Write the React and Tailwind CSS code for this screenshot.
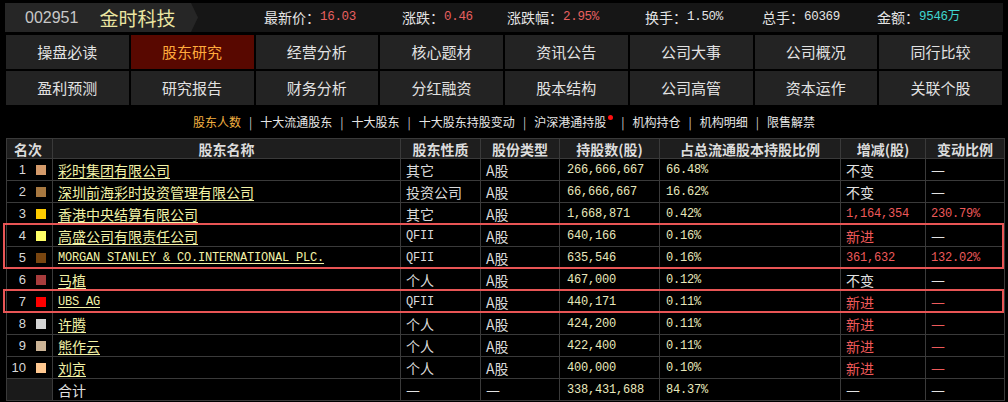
const CJK = "font-['Noto_Sans_CJK_SC','Noto_Sans',sans-serif]";
const MONO = "font-['Liberation_Mono','Noto_Sans_CJK_SC',monospace]";

const navRows = [
  ["操盘必读", "股东研究", "经营分析", "核心题材", "资讯公告", "公司大事", "公司概况", "同行比较"],
  ["盈利预测", "研究报告", "财务分析", "分红融资", "股本结构", "公司高管", "资本运作", "关联个股"],
];

const subTabs = ["股东人数", "十大流通股东", "十大股东", "十大股东持股变动", "沪深港通持股", "机构持仓", "机构明细", "限售解禁"];

const rows = [
  { no: 1, color: "#d49a6a", name: "彩时集团有限公司", kind: "其它", shares: "266,666,667", pct: "66.48%", chg: "不变", ratio: "—" },
  { no: 2, color: "#a87840", name: "深圳前海彩时投资管理有限公司", kind: "投资公司", shares: "66,666,667", pct: "16.62%", chg: "不变", ratio: "—" },
  { no: 3, color: "#ffcc00", name: "香港中央结算有限公司", kind: "其它", shares: "1,668,871", pct: "0.42%", chg: "1,164,354", ratio: "230.79%", red: true, redRatio: true },
  { no: 4, color: "#ffff66", name: "高盛公司有限责任公司", kind: "QFII", shares: "640,166", pct: "0.16%", chg: "新进", ratio: "—", red: true },
  { no: 5, color: "#7a4610", name: "MORGAN STANLEY & CO.INTERNATIONAL PLC.", latin: true, kind: "QFII", shares: "635,546", pct: "0.16%", chg: "361,632", ratio: "132.02%", red: true, redRatio: true },
  { no: 6, color: "#a83c3c", name: "马植", kind: "个人", shares: "467,000", pct: "0.12%", chg: "不变", ratio: "—" },
  { no: 7, color: "#ff0000", name: "UBS AG", latin: true, kind: "QFII", shares: "440,171", pct: "0.11%", chg: "新进", ratio: "—", red: true, redRatio: true },
  { no: 8, color: "#d4d4d4", name: "许腾", kind: "个人", shares: "424,200", pct: "0.11%", chg: "新进", ratio: "—", red: true, redRatio: true },
  { no: 9, color: "#ccb496", name: "熊作云", kind: "个人", shares: "422,400", pct: "0.11%", chg: "新进", ratio: "—", red: true, redRatio: true },
  { no: 10, color: "#ffc890", name: "刘京", kind: "个人", shares: "400,000", pct: "0.10%", chg: "新进", ratio: "—", red: true, redRatio: true },
];

function Stat({ label, value, color, w }) {
  return (
    <div className={`${w} flex items-center shrink-0`}>
      <span className={`${CJK} text-[14px] text-[#e4e4e4]`}>{label}：</span>
      <span className={`${MONO} text-[12.5px] tracking-[-0.3px] ${color}`}>{value}</span>
    </div>
  );
}

function fontFor(s) {
  if (s === "—") return "font-['DejaVu_Sans',sans-serif] text-[14px]";
  if (/^[0-9,.%A-Z ]+$/.test(s)) return `${MONO} text-[12px] tracking-[-0.2px]`;
  return `${CJK} text-[14px]`;
}

function Cell({ children, className = "" }) {
  return (
    <td className={`border border-[#3a3a3a] h-[22px] p-0 pl-[5px] whitespace-nowrap overflow-hidden ${fontFor(children)} ${className}`}>
      {children}
    </td>
  );
}

export default function App() {
  return (
    <div className={`w-[1008px] h-[402px] bg-black overflow-hidden pt-[3px] ${CJK}`}>
      {/* top bar */}
      <div className="mx-[5px] h-[29px] bg-[#161616] flex items-center">
        <div className="h-full w-[193px] bg-[#262626] flex items-center [clip-path:polygon(0_0,186px_0,193px_50%,186px_100%,0_100%)]">
          <span className="ml-[20px] font-['Liberation_Sans',sans-serif] text-[16px] text-[#c8c8c8]">002951</span>
          <span className="ml-[21px] text-[19px] text-[#ebe6a2] leading-none">金时科技</span>
        </div>
        <div className="ml-[66px] flex items-center">
          <Stat label="最新价" value="16.03" color="text-[#e86060]" w="w-[138px]" />
          <Stat label="涨跌" value="0.46" color="text-[#e86060]" w="w-[105px]" />
          <Stat label="涨跌幅" value="2.95%" color="text-[#e86060]" w="w-[138px]" />
          <Stat label="换手" value="1.50%" color="text-[#e4e4e4]" w="w-[117px]" />
          <Stat label="总手" value="60369" color="text-[#e4e4e4]" w="w-[115px]" />
          <Stat label="金额" value="9546万" color="text-[#3fd6d0]" w="w-[110px]" />
        </div>
      </div>

      {/* nav */}
      <div className="mt-[3px] mx-[6px] grid grid-cols-8 gap-[2px]">
        {navRows.flat().map((t) => (
          <div
            key={t}
            className={`h-[34px] flex items-center justify-center text-[15px] ${t === "股东研究" ? "bg-[#580800] text-[#ffaa3c]" : "bg-[#232323] text-[#e2e2e2]"}`}
          >
            {t}
          </div>
        ))}
      </div>

      {/* sub tabs */}
      <div className="h-[33px] flex items-center justify-center text-[12px] text-[#e6e6e6]">
        {subTabs.map((t, i) => (
          <div key={t} className="flex items-center">
            {i > 0 && <span className="mx-[8px] text-[#cfcfcf]">|</span>}
            <span className={i === 0 ? "text-[#f2b040]" : ""}>{t}</span>
            {t === "沪深港通持股" && <span className="ml-[2px] mb-[8px] w-[5px] h-[5px] rounded-full bg-[#ff1010]" />}
          </div>
        ))}
      </div>

      {/* table */}
      <div className="relative mx-[6px]">
        <table className="table-fixed border-collapse w-[998px] leading-[18px]">
          <colgroup>
            <col className="w-[46px]" />
            <col className="w-[348px]" />
            <col className="w-[80px]" />
            <col className="w-[79px]" />
            <col className="w-[100px]" />
            <col className="w-[181px]" />
            <col className="w-[85px]" />
            <col className="w-[79px]" />
          </colgroup>
          <thead>
            <tr className="h-[20px] bg-[#1e1e1e] text-[#dcdcdc] font-bold text-[14px]">
              <th className="border border-[#3a3a3a] h-[20px] p-0 pl-[7px] text-left font-bold">名次</th>
              <th className="border border-[#3a3a3a] p-0 font-bold">股东名称</th>
              <th className="border border-[#3a3a3a] p-0 font-bold">股东性质</th>
              <th className="border border-[#3a3a3a] p-0 font-bold">股份类型</th>
              <th className="border border-[#3a3a3a] p-0 font-bold">持股数(股)</th>
              <th className="border border-[#3a3a3a] p-0 font-bold">占总流通股本持股比例</th>
              <th className="border border-[#3a3a3a] p-0 font-bold">增减(股)</th>
              <th className="border border-[#3a3a3a] p-0 font-bold">变动比例</th>
            </tr>
          </thead>
          <tbody>
            {rows.map((r) => (
              <tr key={r.no} className="h-[22px]">
                <td className="border border-[#3a3a3a] h-[22px] p-0">
                  <div className="flex items-center">
                    <span className="w-[19px] text-right font-['Liberation_Sans',sans-serif] text-[13px] text-[#d8d8d8]">{r.no}</span>
                    <span className="ml-[10px] w-[10px] h-[10px]" style={{ backgroundColor: r.color }} />
                  </div>
                </td>
                <td className={`border border-[#3a3a3a] p-0 pl-[5px] whitespace-nowrap text-[#f2f2a6] ${r.latin ? `${MONO} text-[12px] tracking-[-0.2px]` : "text-[14px]"}`}>
                  <span className="underline underline-offset-[2px]">{r.name}</span>
                </td>
                <Cell className="text-[#dadada]">{r.kind}</Cell>
                <Cell className="text-[#dadada]">A股</Cell>
                <Cell className="text-[#e8e8bc] pl-[7px]">{r.shares}</Cell>
                <Cell className="text-[#e8e8bc] pl-[6px]">{r.pct}</Cell>
                <Cell className={r.red ? "text-[#ee5a5a]" : "text-[#e2e2e2]"}>{r.chg}</Cell>
                <Cell className={r.redRatio ? "text-[#ee5a5a]" : "text-[#e2e2e2]"}>{r.ratio}</Cell>
              </tr>
            ))}
            <tr className="h-[22px]">
              <td className="border border-[#3a3a3a] h-[22px] p-0 bg-[#1a1a1a]" />
              <Cell className="text-[#e2e2e2]">合计</Cell>
              <Cell className="text-[#e2e2e2]">—</Cell>
              <Cell className="text-[#e2e2e2]">—</Cell>
              <Cell className="text-[#e8e8bc] pl-[7px]">338,431,688</Cell>
              <Cell className="text-[#e8e8bc] pl-[6px]">84.37%</Cell>
              <Cell className="text-[#e2e2e2]">—</Cell>
              <Cell className="text-[#e2e2e2]">—</Cell>
            </tr>
          </tbody>
        </table>
        {/* highlight boxes */}
        <div className="absolute left-[-3px] right-[-2px] top-[85px] h-[46px] border-2 border-[#e85555] pointer-events-none" />
        <div className="absolute left-[-3px] right-[-2px] top-[151px] h-[24px] border-2 border-[#e85555] pointer-events-none" />
      </div>
    </div>
  );
}
